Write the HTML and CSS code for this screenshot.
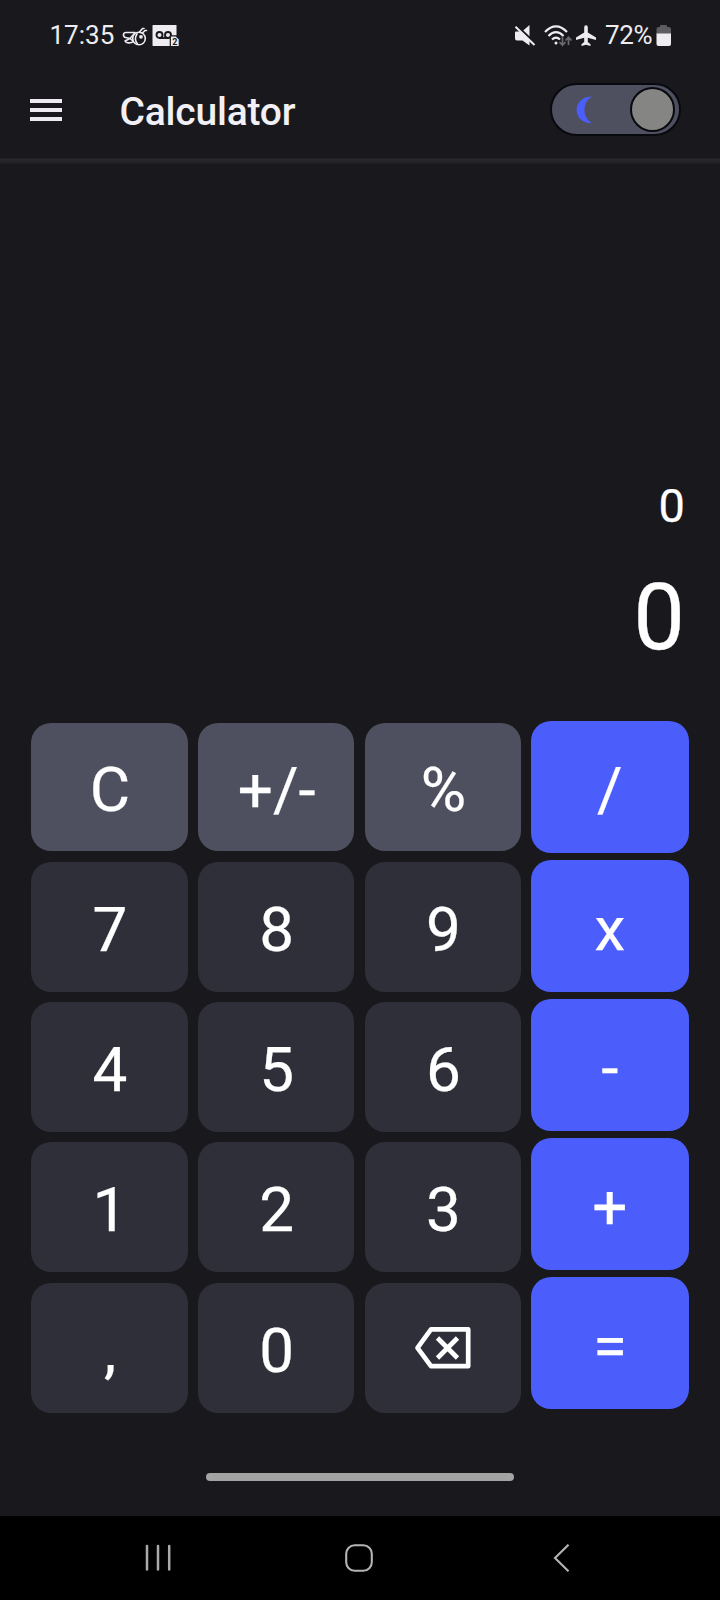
FILE: index.html
```html
<!DOCTYPE html>
<html lang="en">
<head>
<meta charset="utf-8">
<title>Calculator</title>
<link rel="stylesheet" href="styles.css">
</head>
<body>
<div class="screen">
  <div class="status">
    <div class="status-left">
      <span class="time">17:35</span>
      <svg class="bee" width="26" height="22" viewBox="0 0 26 22" fill="none" stroke="#eeecf0" stroke-width="1.600" stroke-linecap="round" stroke-linejoin="round">
        <circle cx="17" cy="13.500" r="6.300"/>
        <path d="M13 7.500H4C1 7.500 .5 11.500 3.500 12.500L8 13.500L12 9M8 13.500L3 16C4 18.500 8 18 11 17M8 13.500L11 16M15 9C13 12 13 16 15.500 19M17.500 7L20.500 3.500H22M20.500 8L23 5.500H24.500"/>
        <circle cx="19" cy="11.800" r="1.100" fill="#eeecf0"/>
      </svg>
      <svg class="voicemail" width="28" height="22" viewBox="0 0 28 22">
        <path fill="#eeecf0" d="M1 0H24.500V10.500H18V21H1Q.5 21 .5 20V.5Z"/>
        <g fill="none" stroke="#19191d" stroke-width="1.900"><circle cx="7.500" cy="10" r="3"/><circle cx="16" cy="10" r="3"/><path d="M7.500 13H16"/></g>
        <path fill="#eeecf0" stroke="#19191d" stroke-width="1.200" d="M18.300 11H24L27.300 14V21.500H18.300Z"/>
        <text class="badge-num" x="20.300" y="20">2</text>
      </svg>
    </div>
    <div class="status-right">
      <svg width="22" height="22" viewBox="0 0 22 22">
        <path fill="#eeecf0" d="M2 6.500H8L15.500 0V20.500L8.500 15.500H3Q1 15.500 1 13.500V7.500Q1 6.500 2 6.500Z"/>
        <path d="M2.200 0L21.500 18.600" stroke="#19191d" stroke-width="2.200"/>
        <path d="M1.500 1.700L20.500 20" stroke="#eeecf0" stroke-width="2"/>
      </svg>
      <svg class="wifi" width="28" height="22" viewBox="0 0 28 22" fill="none" stroke="#eeecf0" stroke-width="2.200">
        <path d="M1 7Q12 -4 23 7M4.500 11Q12 3.500 19.500 11M8 14.500Q12 10.500 16 14.500"/>
        <circle cx="12" cy="18" r="1.500" fill="#eeecf0" stroke="none"/>
        <path stroke="#69696e" stroke-width="1.700" d="M18.500 11V20M15.500 17L18.500 20.200L21.500 17M24.500 20V12.500M21.500 15.500L24.500 12.300L27.500 15.500"/>
      </svg>
      <svg class="plane" width="22" height="22" viewBox="0 0 22 22">
        <path fill="#eeecf0" d="M9.200 2.500Q9.200 .3 11 .3T12.800 2.500V7.500L21 12.500V15L12.800 12.700V17L15.500 19.200V21L11 19.700L6.500 21V19.200L9.200 17V12.700L1 15V12.500L9.200 7.500Z"/>
      </svg>
      <span class="percent">72%</span>
      <svg class="battery" width="16" height="22" viewBox="0 0 16 22">
        <path fill="#5c5c61" d="M4 2V1Q4 0 5 0H10Q11 0 11 1V2H13Q15 2 15 4V9H.5V4Q.5 2 2.500 2Z"/>
        <path fill="#eeecf0" d="M.5 8.500H15V19Q15 21 13 21H2.500Q.5 21 .5 19Z"/>
      </svg>
    </div>
  </div>

  <header class="appbar">
    <div class="menu"><i></i><i></i><i></i></div>
    <h1 class="title">Calculator</h1>
    <div class="toggle">
      <svg width="17" height="28" viewBox="0 0 17 28"><path fill="#4b5efc" d="M16 .6C-4.500 .6 -4.500 27.200 16 27.200C6 21.500 6 6.300 16 .6Z"/></svg>
      <div class="knob"></div>
    </div>
  </header>

  <main class="display">
    <div class="expression">0</div>
    <div class="result">0</div>
  </main>

  <div class="keypad">
    <div class="keys">
      <div class="key light">C</div><div class="key light">+/-</div><div class="key light">%</div>
      <div class="key">7</div><div class="key">8</div><div class="key">9</div>
      <div class="key">4</div><div class="key">5</div><div class="key">6</div>
      <div class="key">1</div><div class="key">2</div><div class="key">3</div>
      <div class="key">,</div><div class="key">0</div>
      <div class="key back">
        <svg width="58" height="44" viewBox="0 0 58 44" fill="none" stroke="#fff" stroke-width="4.700">
          <path stroke-linejoin="round" d="M17 3.300H54.200V40.200H17L3.500 21.800Z"/>
          <path d="M23.500 12L43.500 32M43.500 12L23.500 32"/>
        </svg>
      </div>
    </div>
    <div class="ops">
      <div class="key">/</div><div class="key">x</div><div class="key">-</div><div class="key">+</div><div class="key">=</div>
    </div>
  </div>

  <div class="handle"></div>

  <nav class="navbar">
    <svg width="28" height="28" viewBox="0 0 28 28" stroke="#aaa" stroke-width="2.500" stroke-linecap="round"><path d="M3 2V25.500M14 2V25.500M25.200 2V25.500"/></svg>
    <svg class="home" width="28" height="28" viewBox="0 0 28 28" fill="none" stroke="#b4b4b4" stroke-width="2.100"><rect x="1.200" y="1.200" width="25.600" height="25.600" rx="8.500"/></svg>
    <svg width="17" height="28" viewBox="0 0 17 28" fill="none" stroke="#b4b4b4" stroke-width="2.100"><path d="M15.500 .7L2 14L15.500 27.300"/></svg>
  </nav>
</div>
</body>
</html>
```
FILE: styles.css
```css
body {
  margin: 0;
  background: #19191d;
  font-family: Roboto, "Noto Sans", sans-serif;
  color: #fff;
}

.screen {
  width: 720px;
  height: 1600px;
  display: flex;
  flex-direction: column;
  overflow: hidden;
}

svg {
  display: block;
  flex: none;
}

.status {
  height: 70px;
  display: flex;
  justify-content: space-between;
  box-sizing: border-box;
  padding: 19px 48px 0 49.500px;
  color: #eeecf0;
  font-size: 26px;
  line-height: 32px;
}

.status-left,
.status-right {
  display: flex;
  height: 32px;
}

.status svg { margin-top: 6px; }
.time { width: 66px; }
.status .bee { margin: 5.500px 0 0 6.500px; }
.voicemail { margin-left: 4px; }
.badge-num { font-size: 9px; font-weight: 700; fill: #19191d; }
.wifi { margin-left: 8px; }
.plane { margin-left: 3px; }
.percent { width: 48px; margin-left: 8px; letter-spacing: -0.3px; }
.battery { margin-left: 3px; }

.appbar {
  height: 95px;
  display: flex;
  align-items: flex-start;
  box-sizing: border-box;
  padding: 13px 39px 0 30px;
  background: linear-gradient(#19191d 88px, #29292d 89px, #242428 92px, #19191d 95px);
}

.menu {
  width: 32px;
  display: flex;
  flex-direction: column;
  gap: 5px;
  margin-top: 16px;
}

.menu i { height: 4px; background: #eeeaf2; }

.title {
  margin: 6px 0 0 57.500px;
  flex: 1;
  color: #f2f0f5;
  font-size: 39px;
  font-weight: 500;
  letter-spacing: -0.200px;
  line-height: 46px;
}

.toggle {
  width: 131px;
  height: 53px;
  flex: none;
  display: flex;
  justify-content: space-between;
  align-items: center;
  box-sizing: border-box;
  padding: 0 4px 0 24px;
  border: 2px solid #08080f;
  border-radius: 27px;
  background: #4e505f;
}

.knob {
  width: 45px;
  height: 45px;
  box-sizing: border-box;
  border: 2px solid #08080f;
  border-radius: 50%;
  background: #858583;
}

.display {
  height: 556px;
  display: flex;
  flex-direction: column;
  justify-content: flex-end;
  box-sizing: border-box;
  padding: 0 35px 49px;
  text-align: right;
}

.expression { font-size: 47px; line-height: 56px; }
.result { margin-top: 30px; font-size: 92px; line-height: 108px; }

.expression,
.result,
.key { -webkit-text-stroke: 0.250px #fff; }

.keypad {
  height: 692px;
  display: flex;
  gap: 9.500px;
  padding: 0 31px 0 31.300px;
}

.keys {
  width: 490px;
  display: grid;
  grid-template-columns: repeat(3, 156.500px);
  grid-template-rows: 139px 140px 140px 141px 130px;
  column-gap: 10.200px;
  padding-top: 2px;
}

.ops {
  flex: 1;
  display: grid;
  grid-template-rows: repeat(5, 132px);
  row-gap: 7.100px;
}

.key {
  display: flex;
  align-items: center;
  justify-content: center;
  box-sizing: border-box;
  height: 130px;
  padding: 6px 0 0 1px;
  border-radius: 20px;
  background: #2e2f38;
  font-size: 62px;
  line-height: 72px;
}

.keys .light { height: 128px; background: #4e505f; }
.keys .back { padding-top: 0; }
.ops .key { height: 132px; padding: 6px 0 0; background: #4b5efc; }

.handle {
  width: 308px;
  height: 8px;
  margin: 60px auto 35px;
  border-radius: 4px;
  background: #a3a3a4;
}

.navbar {
  flex: 1;
  display: flex;
  align-items: flex-start;
  justify-content: space-between;
  padding: 28px 150px 0 144px;
  background: #000;
}

.home { margin-right: 7px; }
```
